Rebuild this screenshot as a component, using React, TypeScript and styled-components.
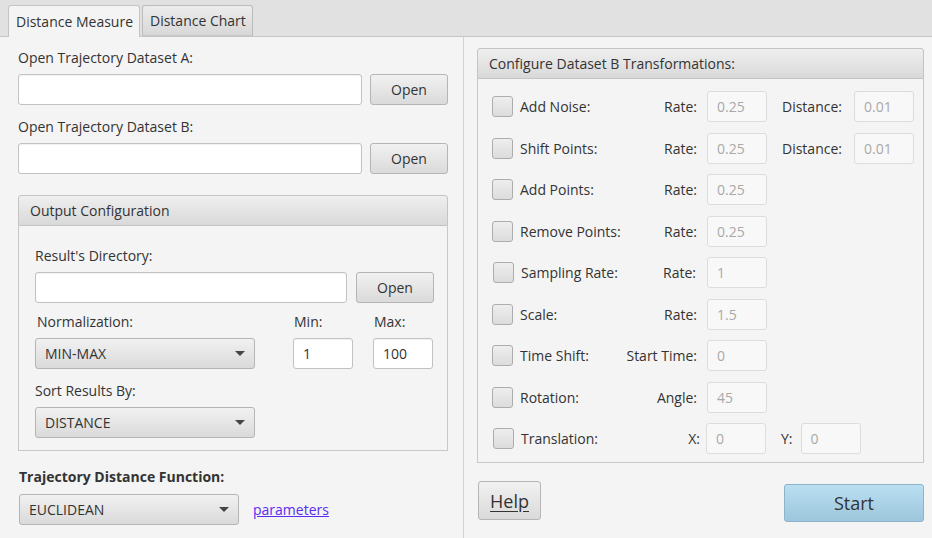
import React from "react";
import styled, { createGlobalStyle } from "styled-components";

const Global = createGlobalStyle`
  html, body { margin: 0; padding: 0; background: #f4f4f4; }
  body { font-family: "Open Sans", "Noto Sans", sans-serif; font-size: 14px; color: #333; }
  * { box-sizing: border-box; }
`;

const Root = styled.div`
  width: 932px;
  height: 538px;
  display: flex;
  flex-direction: column;
  background: #f4f4f4;
  overflow: hidden;
`;

const TabHeader = styled.div`
  height: 37px;
  display: flex;
  align-items: flex-end;
  gap: 2px;
  padding-left: 8px;
  background: #e1e1e1;
  border-bottom: 1px solid #c6c6c6;
`;

const Tab = styled.div<{ $active?: boolean }>`
  height: ${(p) => (p.$active ? "32px" : "31px")};
  margin-bottom: ${(p) => (p.$active ? "-1px" : "0")};
  padding: 0 6px 0 7px;
  display: flex;
  align-items: center;
  font-size: 14px;
  border: 1px solid ${(p) => (p.$active ? "#c4c4c4" : "#bcbcbc")};
  border-bottom: ${(p) => (p.$active ? "none" : "1px solid #c6c6c6")};
  border-radius: 3px 3px 0 0;
  background: ${(p) => (p.$active ? "#f4f4f4" : "linear-gradient(#ececec, #d8d8d8)")};
`;

const Body = styled.div`
  flex: 1;
  display: flex;
`;

const LeftCol = styled.div`
  width: 464px;
  border-right: 1px solid #d3d3d3;
  padding: 11px 15px 0 18px;
  display: flex;
  flex-direction: column;
`;

const RightCol = styled.div`
  flex: 1;
  padding: 11px 8px 0 13px;
  display: flex;
  flex-direction: column;
`;

const Label = styled.div<{ $mt?: number; $indent?: number }>`
  height: 20px;
  line-height: 20px;
  margin-top: ${(p) => p.$mt ?? 0}px;
  margin-bottom: 6px;
  padding-left: ${(p) => p.$indent ?? 0}px;
  white-space: nowrap;
`;

const BoldLabel = styled(Label)`
  font-weight: 700;
  margin-bottom: 7px;
`;

const FieldRow = styled.div<{ $gap: number }>`
  display: flex;
  align-items: center;
  gap: ${(p) => p.$gap}px;
`;

const TextField = styled.div<{ $w?: number; $disabled?: boolean }>`
  height: 31px;
  ${(p) => (p.$w ? `width: ${p.$w}px;` : "flex: 1;")}
  flex-shrink: 0;
  border: 1px solid ${(p) => (p.$disabled ? "#dcdcdc" : "#c2c2c2")};
  border-radius: 3px;
  background: ${(p) => (p.$disabled ? "#f8f8f8" : "#fff")};
  box-shadow: ${(p) => (p.$disabled ? "none" : "inset 0 1px 1px rgba(0,0,0,0.06)")};
  padding: 0 9px;
  display: flex;
  align-items: center;
  color: ${(p) => (p.$disabled ? "#a9a9a9" : "#333")};
  font-size: 14px;
`;

const Button = styled.div<{ $w: number; $h?: number; $big?: boolean }>`
  width: ${(p) => p.$w}px;
  height: ${(p) => p.$h ?? 31}px;
  flex-shrink: 0;
  border: 1px solid #b5b5b5;
  border-radius: 3px;
  background: linear-gradient(#f1f1f1, #dadada);
  display: flex;
  align-items: center;
  justify-content: center;
  font-size: ${(p) => (p.$big ? 18 : 14)}px;
`;

const Underline = styled.span`
  text-decoration: underline;
  text-underline-offset: 3px;
`;

const StartButton = styled(Button)`
  margin-top: 3px;
  border-color: #8db4cc;
  background: linear-gradient(#b9dff1, #9dc6dc);
`;

const Combo = styled.div<{ $ml?: number }>`
  width: 220px;
  height: 31px;
  margin-left: ${(p) => p.$ml ?? 0}px;
  border: 1px solid #b5b5b5;
  border-radius: 3px;
  background: linear-gradient(#f1f1f1, #dadada);
  display: flex;
  align-items: center;
  justify-content: space-between;
  padding: 0 9px 0 9px;
  font-size: 14px;
`;

const Arrow = styled.span`
  width: 0;
  height: 0;
  border-left: 5px solid transparent;
  border-right: 5px solid transparent;
  border-top: 5px solid #444;
`;

const Pane = styled.div`
  display: flex;
  flex-direction: column;
`;

const PaneHeader = styled.div`
  height: 31px;
  border: 1px solid #c4c4c4;
  border-radius: 3px 3px 0 0;
  background: linear-gradient(#efefef, #d9d9d9);
  display: flex;
  align-items: center;
  padding-left: 11px;
  font-size: 14px;
`;

const PaneContent = styled.div<{ $pad: string }>`
  border: 1px solid #c8c8c8;
  border-top: none;
  padding: ${(p) => p.$pad};
  display: flex;
  flex-direction: column;
`;

const OutputPane = styled(Pane)`
  margin-top: 21px;
  width: 430px;
`;

const NormGrid = styled.div`
  display: grid;
  grid-template-columns: 258px 80px 60px;
  margin-top: 9px;
`;

const NormCell = styled.div`
  display: flex;
  flex-direction: column;
`;

const FuncRow = styled.div`
  display: flex;
  align-items: center;
  gap: 14px;
`;

const Link = styled.span`
  color: #5a2cf2;
  text-decoration: underline;
  font-size: 14px;
`;

const TransformPane = styled(Pane)`
  width: 447px;
`;

const Rows = styled.div`
  display: flex;
  flex-direction: column;
  gap: 10.5px;
`;

const Row = styled.div<{ $shift?: number }>`
  display: flex;
  align-items: center;
  height: 31px;
  padding-left: ${(p) => p.$shift ?? 0}px;
`;

const Check = styled.div`
  width: 21px;
  height: 21px;
  margin-right: 7px;
  border: 1px solid #adadad;
  border-radius: 3px;
  background: linear-gradient(#eeeeee, #dcdcdc);
`;

const Name = styled.div`
  width: 100px;
  white-space: nowrap;
`;

const ParamLabel = styled.div<{ $w?: number; $pr?: number }>`
  width: ${(p) => p.$w ?? 87}px;
  padding-right: ${(p) => p.$pr ?? 10}px;
  text-align: right;
  white-space: nowrap;
`;

const SecondLabel = styled.div<{ $pr: number }>`
  margin-left: 15px;
  margin-right: ${(p) => p.$pr}px;
  white-space: nowrap;
`;

const Bottom = styled.div`
  display: flex;
  justify-content: space-between;
  align-items: flex-start;
  margin-top: 18px;
  padding-left: 1px;
`;

type T = {
  name: string;
  p: string;
  v: string;
  p2?: string;
  v2?: string;
  w?: number;
  pr?: number;
  pr2?: number;
  shift?: number;
};

const transforms: T[] = [
  { name: "Add Noise:", p: "Rate:", v: "0.25", p2: "Distance:", v2: "0.01", pr2: 12 },
  { name: "Shift Points:", p: "Rate:", v: "0.25", p2: "Distance:", v2: "0.01", pr2: 12 },
  { name: "Add Points:", p: "Rate:", v: "0.25" },
  { name: "Remove Points:", p: "Rate:", v: "0.25" },
  { name: "Sampling Rate:", p: "Rate:", v: "1", shift: 1, w: 86, pr: 11 },
  { name: "Scale:", p: "Rate:", v: "1.5" },
  { name: "Time Shift:", p: "Start Time:", v: "0" },
  { name: "Rotation:", p: "Angle:", v: "45" },
  { name: "Translation:", p: "X:", v: "0", w: 85, pr: 6, p2: "Y:", v2: "0", pr2: 8, shift: 1 },
];

export default function App() {
  return (
    <Root>
      <Global />
      <TabHeader>
        <Tab $active>Distance Measure</Tab>
        <Tab>Distance Chart</Tab>
      </TabHeader>
      <Body>
        <LeftCol>
          <Label>Open Trajectory Dataset A:</Label>
          <FieldRow $gap={8}>
            <TextField />
            <Button $w={78}>Open</Button>
          </FieldRow>
          <Label $mt={12}>Open Trajectory Dataset B:</Label>
          <FieldRow $gap={8}>
            <TextField />
            <Button $w={78}>Open</Button>
          </FieldRow>

          <OutputPane>
            <PaneHeader>Output Configuration</PaneHeader>
            <PaneContent $pad="20px 13px 12px 16px">
              <Label>Result's Directory:</Label>
              <FieldRow $gap={9}>
                <TextField />
                <Button $w={78}>Open</Button>
              </FieldRow>
              <NormGrid>
                <NormCell>
                  <Label $indent={2}>Normalization:</Label>
                  <Combo>
                    MIN-MAX
                    <Arrow />
                  </Combo>
                </NormCell>
                <NormCell>
                  <Label $indent={1}>Min:</Label>
                  <TextField $w={60}>1</TextField>
                </NormCell>
                <NormCell>
                  <Label $indent={1}>Max:</Label>
                  <TextField $w={60}>100</TextField>
                </NormCell>
              </NormGrid>
              <Label $mt={12}>Sort Results By:</Label>
              <Combo>
                DISTANCE
                <Arrow />
              </Combo>
            </PaneContent>
          </OutputPane>

          <BoldLabel $mt={16} $indent={1}>Trajectory Distance Function:</BoldLabel>
          <FuncRow>
            <Combo $ml={1}>
              EUCLIDEAN
              <Arrow />
            </Combo>
            <Link>parameters</Link>
          </FuncRow>
        </LeftCol>

        <RightCol>
          <TransformPane>
            <PaneHeader>Configure Dataset B Transformations:</PaneHeader>
            <PaneContent $pad="12px 9px 8px 14px">
              <Rows>
                {transforms.map((t) => (
                  <Row key={t.name} $shift={t.shift}>
                    <Check />
                    <Name>{t.name}</Name>
                    <ParamLabel $w={t.w} $pr={t.pr}>
                      {t.p}
                    </ParamLabel>
                    <TextField $w={60} $disabled>
                      {t.v}
                    </TextField>
                    {t.p2 && (
                      <>
                        <SecondLabel $pr={t.pr2 ?? 12}>{t.p2}</SecondLabel>
                        <TextField $w={60} $disabled>
                          {t.v2}
                        </TextField>
                      </>
                    )}
                  </Row>
                ))}
              </Rows>
            </PaneContent>
          </TransformPane>
          <Bottom>
            <Button $w={63} $h={39} $big>
              <Underline>Help</Underline>
            </Button>
            <StartButton $w={140} $h={38} $big>
              Start
            </StartButton>
          </Bottom>
        </RightCol>
      </Body>
    </Root>
  );
}
